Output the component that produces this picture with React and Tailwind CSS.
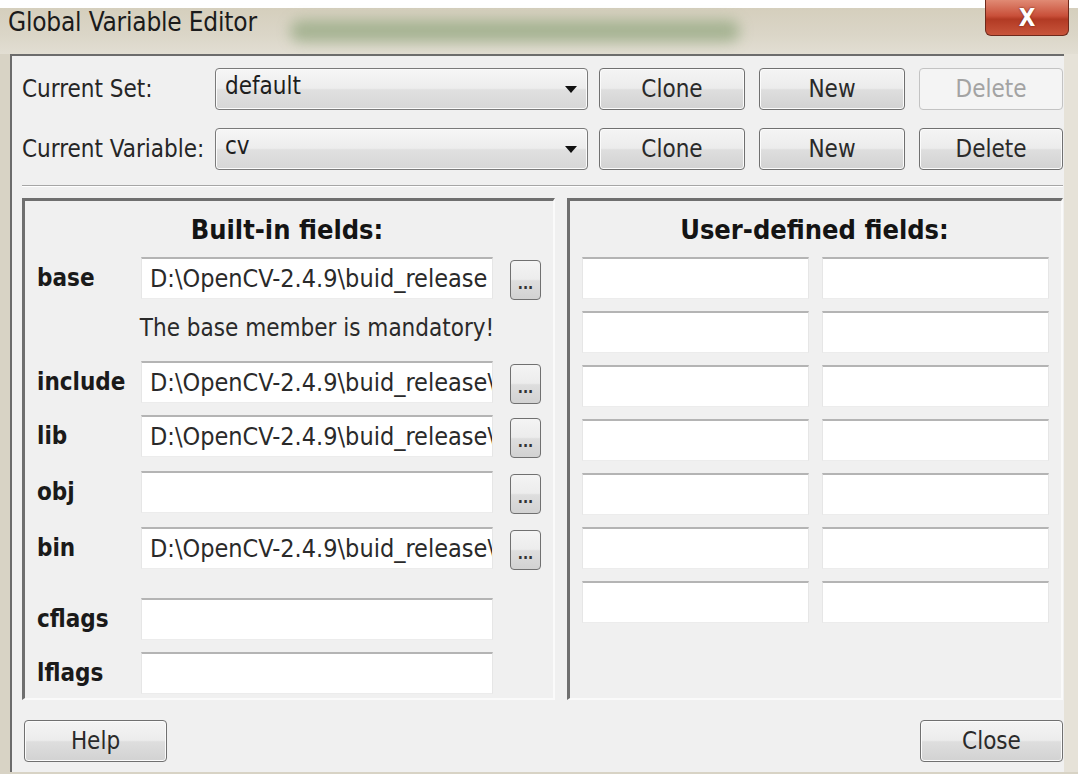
import React from 'react';

const FONT = "font-['DejaVu_Sans_Condensed','DejaVu_Sans',sans-serif] [font-stretch:condensed]";

// Win7-style push button
function PushButton({ children, disabled = false, className = '' }) {
    return (
        <button
            type="button"
            className={
                'h-[42px] rounded-[4px] border flex items-center justify-center text-[24px] ' +
                (disabled
                    ? 'border-[#c3c3c3] bg-[#f4f4f4] text-[#a3a3a3] '
                    : 'border-[#707070] bg-[linear-gradient(to_bottom,#f4f4f4_0%,#ececec_48%,#dedede_52%,#d2d2d2_100%)] text-[#2a2a2a] shadow-[inset_0_0_0_1px_#fbfbfb] ') +
                className
            }
        >
            {children}
        </button>
    );
}

function Combo({ value }) {
    return (
        <div className="w-[373px] h-[42px] rounded-[4px] border border-[#7a7a7a] bg-[linear-gradient(to_bottom,#f6f6f6_0%,#ededed_48%,#e0e0e0_52%,#d6d6d6_100%)] shadow-[inset_0_0_0_1px_#fbfbfb] flex items-start justify-between pl-[9px] pr-[10px]">
            <span className="text-[24px] text-[#1e1e1e] leading-[34px]">{value}</span>
            <svg width="12" height="7" viewBox="0 0 12 7" className="mt-[17px]">
                <path d="M0 0h12L6 7z" fill="#111" />
            </svg>
        </div>
    );
}

function TextField({ value = '', className = '' }) {
    return (
        <input
            type="text"
            readOnly
            value={value}
            className={'h-[42px] bg-white border-t-2 border-[#b4b4b4] border-x border-x-[#e6e6e6] border-b border-b-[#ececec] pl-[8px] pr-0 text-[25px] text-[#2a2a2a] outline-none ' + className}
        />
    );
}

function BrowseButton() {
    return (
        <button
            type="button"
            className="w-[31px] h-[40px] mt-[3px] rounded-[4px] border border-[#707070] bg-[linear-gradient(to_bottom,#f4f4f4_0%,#ececec_48%,#dedede_52%,#d2d2d2_100%)] flex items-end justify-center pb-[7px] text-[15px] font-bold leading-none text-[#333]"
        >
            ...
        </button>
    );
}

const builtIn = [
    { name: 'base', value: 'D:\\OpenCV-2.4.9\\buid_release', browse: true },
    { name: 'include', value: 'D:\\OpenCV-2.4.9\\buid_release\\include', browse: true },
    { name: 'lib', value: 'D:\\OpenCV-2.4.9\\buid_release\\lib', browse: true },
    { name: 'obj', value: '', browse: true },
    { name: 'bin', value: 'D:\\OpenCV-2.4.9\\buid_release\\bin', browse: true },
    { name: 'cflags', value: '', browse: false },
    { name: 'lflags', value: '', browse: false },
];

function FieldRow({ field, className = '' }) {
    return (
        <div className={'flex items-start ' + className}>
            <div className="w-[104px] h-[42px] flex items-center text-[24px] font-bold text-[#1a1a1a]">{field.name}</div>
            <TextField value={field.value} className="w-[352px]" />
            {field.browse && <div className="ml-[17px]"><BrowseButton /></div>}
        </div>
    );
}

export default function App() {
    const [base, include, lib, obj, bin, cflags, lflags] = builtIn;

    return (
        <div className={'w-[1078px] h-[774px] relative overflow-hidden bg-[#d8d3c5] ' + FONT}>
            {/* caption */}
            <div className="h-[8px] bg-white" />
            <div className="h-[46px] relative flex items-start pl-[8px] bg-[linear-gradient(to_bottom,#d5cfbd,#dbd6c8_60%,#e2ded3)]">
                <div className="absolute left-[290px] top-[12px] w-[450px] h-[22px] rounded-full bg-[#8fa57c] opacity-70 blur-[7px]" />
                <span className="relative text-[26px] leading-[28px] text-[#1b1b1b] tracking-[-0.2px]">Global Variable Editor</span>
            </div>
            <div className="absolute left-[985px] top-0 w-[84px] h-[36px] rounded-b-[6px] border border-t-0 border-[#6e2a1c] bg-[linear-gradient(to_bottom,#e08a74,#c9503a_45%,#b23a24_55%,#c8553b)] flex items-center justify-center">
                <span className="text-[24px] font-bold text-white leading-none [text-shadow:0_0_2px_#5a1a10]">X</span>
            </div>

            {/* dialog client area */}
            <div className="flex">
                <div className="w-[10px]" />
                <div className="w-[1054px] h-[718px] border-t-2 border-l-2 border-[#6c6c6c] bg-[#f0f0f0] pl-[10px] pt-[12px] flex flex-col">
                    <div className="flex items-center">
                        <div className="w-[193px] text-[24px] text-[#262626]">Current Set:</div>
                        <Combo value="default" />
                        <PushButton className="w-[146px] ml-[11px]">Clone</PushButton>
                        <PushButton className="w-[146px] ml-[14px]">New</PushButton>
                        <PushButton className="w-[144px] ml-[14px]" disabled>Delete</PushButton>
                    </div>
                    <div className="flex items-center mt-[18px]">
                        <div className="w-[193px] text-[24px] text-[#262626]">Current Variable:</div>
                        <Combo value="cv" />
                        <PushButton className="w-[146px] ml-[11px]">Clone</PushButton>
                        <PushButton className="w-[146px] ml-[14px]">New</PushButton>
                        <PushButton className="w-[144px] ml-[14px]">Delete</PushButton>
                    </div>

                    <div className="mt-[15px] w-[1041px] border-t border-[#a6a6a6] border-b border-b-white" />

                    <div className="mt-[11px] flex gap-[12px]">
                        {/* built-in fields */}
                        <div className="w-[533px] h-[502px] border-t-[3px] border-l-[3px] border-[#6f6f6f] border-r-2 border-b-2 border-r-[#fafafa] border-b-[#fafafa] pt-[11px] pl-[12px]">
                            <div className="h-[36px] flex items-center justify-center pr-[16px] text-[27px] font-bold text-[#141414]">Built-in fields:</div>
                            <FieldRow field={base} className="mt-[9px]" />
                            <div className="h-[30px] mt-[13px] ml-[104px] w-[352px] flex items-center justify-center whitespace-nowrap text-[24px] text-[#2a2a2a]">
                                The base member is mandatory!
                            </div>
                            <FieldRow field={include} className="mt-[18px]" />
                            <FieldRow field={lib} className="mt-[11px]" />
                            <FieldRow field={obj} className="mt-[13px]" />
                            <FieldRow field={bin} className="mt-[13px]" />
                            <FieldRow field={cflags} className="mt-[28px]" />
                            <FieldRow field={lflags} className="mt-[12px]" />
                        </div>

                        {/* user-defined fields */}
                        <div className="w-[496px] h-[502px] border-t-[3px] border-l-[3px] border-[#6f6f6f] border-r-2 border-b-2 border-r-[#fafafa] border-b-[#fafafa] pt-[11px] pl-[12px]">
                            <div className="h-[36px] flex items-center justify-center pr-[14px] text-[27px] font-bold text-[#141414]">User-defined fields:</div>
                            <div className="mt-[9px] grid grid-cols-[227px_227px] gap-x-[13px] gap-y-[12px]">
                                {Array.from({ length: 14 }).map((_, i) => (
                                    <TextField key={i} className="w-[227px]" />
                                ))}
                            </div>
                        </div>
                    </div>

                    <div className="mt-[20px] flex justify-between w-[1041px]">
                        <PushButton className="w-[143px] ml-[2px]">Help</PushButton>
                        <PushButton className="w-[143px]">Close</PushButton>
                    </div>
                </div>
                <div className="flex-1 bg-[#e6e2d8]" />
            </div>
        </div>
    );
}
